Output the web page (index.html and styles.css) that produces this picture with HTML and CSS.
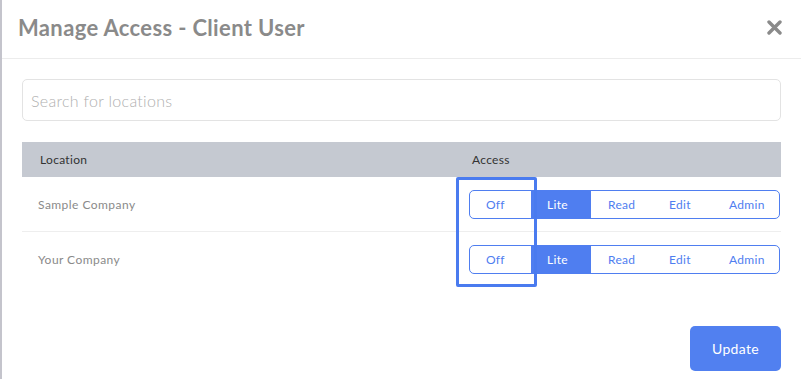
FILE: index.html
```html
<!DOCTYPE html>
<html>
<head>
<meta charset="utf-8">
<link rel="stylesheet" href="styles.css">
</head>
<body>
<div class="modal">
  <div class="modal-header">
    <h1 class="title">Manage Access - Client User</h1>
    <svg class="close" width="15" height="15" viewBox="0 0 15 15"><path d="M2 2 L13 13 M13 2 L2 13" stroke="#8a8a8a" stroke-width="3.4" stroke-linecap="round"/></svg>
  </div>
  <div class="modal-body">
    <div class="search">Search for locations</div>
    <div class="table">
      <div class="thead">
        <div class="col-loc">Location</div>
        <div class="col-acc">Access</div>
      </div>
      <div class="row">
        <div class="col-loc name">Sample Company</div>
        <div class="col-acc">
          <div class="group">
            <span class="seg s-off">Off</span><span class="seg s-lite active">Lite</span><span class="seg s-read">Read</span><span class="seg s-edit">Edit</span><span class="seg s-admin">Admin</span>
          </div>
        </div>
      </div>
      <div class="row last">
        <div class="col-loc name">Your Company</div>
        <div class="col-acc">
          <div class="group">
            <span class="seg s-off">Off</span><span class="seg s-lite active">Lite</span><span class="seg s-read">Read</span><span class="seg s-edit">Edit</span><span class="seg s-admin">Admin</span>
          </div>
        </div>
      </div>
      <div class="highlight"></div>
    </div>
    <div class="footer">
      <button class="update">Update</button>
    </div>
  </div>
</div>
</body>
</html>
```
FILE: styles.css
```css
* { box-sizing: border-box; }
html, body { margin: 0; padding: 0; background: #fff; }
body { font-family: "Lato", "Open Sans", sans-serif; }
.modal {
  width: 801px;
  height: 379px;
  border-left: 2px solid #c4c4cc;
  overflow: hidden;
}
.modal-header {
  height: 59px;
  border-bottom: 1px solid #ececec;
  display: flex;
  align-items: center;
  justify-content: space-between;
  padding: 0 19px 0 16px;
}
.title {
  margin: 0;
  font-size: 22px;
  font-weight: 700;
  color: #8a8a8a;
  letter-spacing: 0.35px;
  position: relative;
  top: -2px;
}
.close { display: block; position: relative; top: -2px; }
.modal-body { padding: 20px 20px 0 20px; }
.search {
  height: 42px;
  border: 1px solid #e3e3e3;
  border-radius: 5px;
  padding: 0 8px;
  display: flex;
  align-items: center;
  font-size: 16px;
  letter-spacing: 0.3px;
  color: #b0b0b0;
  font-weight: 300;
}
.table { margin-top: 21px; position: relative; }
.thead {
  height: 35px;
  background: #c5c9d1;
  display: flex;
  align-items: center;
  font-size: 12px;
  letter-spacing: 0.3px;
  color: #333;
}
.col-loc { width: 450px; padding-left: 18px; }
.col-acc { flex: 1; }
.row {
  height: 55px;
  display: flex;
  align-items: center;
  border-bottom: 1px solid #eeeeee;
}
.row.last { border-bottom: none; }
.name { font-size: 12px; color: #8a8a8a; padding-left: 16px; letter-spacing: 0.45px; }
.group {
  display: flex;
  height: 29px;
  margin-left: -3px;
  width: 311px;
  border: 1px solid #4f7ef0;
  border-radius: 5px;
  overflow: hidden;
}
.seg {
  display: flex;
  align-items: center;
  font-size: 12px;
  letter-spacing: 0.3px;
  color: #4f7ef0;
  font-weight: 400;
}
.s-off { width: 62px; padding-left: 16px; border-right: 1px solid #4f7ef0; }
.s-lite { width: 59px; padding-left: 15px; }
.s-read { width: 60px; padding-left: 17px; }
.s-edit { width: 56px; padding-left: 18px; }
.s-admin { flex: 1; padding-left: 22px; }
.seg.active { background: #4f7ef0; color: #fff; }
.highlight {
  position: absolute;
  left: 434px;
  top: 35px;
  width: 81px;
  height: 110px;
  border: 3px solid #4a7bef;
  border-radius: 2px;
}
.footer {
  display: flex;
  justify-content: flex-end;
  margin-top: 39px;
}
.update {
  width: 91px;
  height: 45px;
  background: #5180f0;
  border: none;
  border-radius: 5px;
  color: #fff;
  font-family: inherit;
  font-size: 14px;
  letter-spacing: 0.3px;
}
```
